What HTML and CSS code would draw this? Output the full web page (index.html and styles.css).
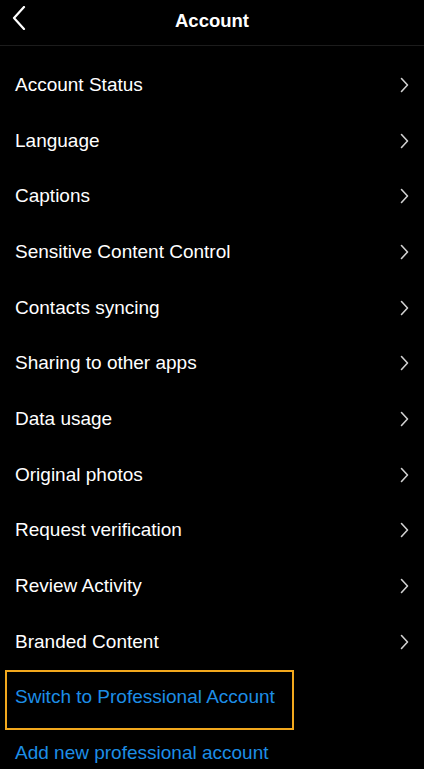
FILE: index.html
```html
<!DOCTYPE html>
<html lang="en">
<head>
  <meta charset="UTF-8">
  <title>Account</title>
  <link rel="stylesheet" href="styles.css">
</head>
<body>
  <div class="header">
    <svg class="back" width="14" height="24" viewBox="0 0 14 24"><path d="M12 1 L2 12 L12 23" fill="none" stroke="#fff" stroke-width="2.2" stroke-linecap="round" stroke-linejoin="round"/></svg>
    <h1>Account</h1>
  </div>

  <ul class="menu">
    <li>Account Status <svg class="chev" viewBox="0 0 9 16"><path d="M1.5 1.5 L7.5 8 L1.5 14.5"/></svg></li>
    <li>Language <svg class="chev" viewBox="0 0 9 16"><path d="M1.5 1.5 L7.5 8 L1.5 14.5"/></svg></li>
    <li>Captions <svg class="chev" viewBox="0 0 9 16"><path d="M1.5 1.5 L7.5 8 L1.5 14.5"/></svg></li>
    <li>Sensitive Content Control <svg class="chev" viewBox="0 0 9 16"><path d="M1.5 1.5 L7.5 8 L1.5 14.5"/></svg></li>
    <li>Contacts syncing <svg class="chev" viewBox="0 0 9 16"><path d="M1.5 1.5 L7.5 8 L1.5 14.5"/></svg></li>
    <li>Sharing to other apps <svg class="chev" viewBox="0 0 9 16"><path d="M1.5 1.5 L7.5 8 L1.5 14.5"/></svg></li>
    <li>Data usage <svg class="chev" viewBox="0 0 9 16"><path d="M1.5 1.5 L7.5 8 L1.5 14.5"/></svg></li>
    <li>Original photos <svg class="chev" viewBox="0 0 9 16"><path d="M1.5 1.5 L7.5 8 L1.5 14.5"/></svg></li>
    <li>Request verification <svg class="chev" viewBox="0 0 9 16"><path d="M1.5 1.5 L7.5 8 L1.5 14.5"/></svg></li>
    <li>Review Activity <svg class="chev" viewBox="0 0 9 16"><path d="M1.5 1.5 L7.5 8 L1.5 14.5"/></svg></li>
    <li>Branded Content <svg class="chev" viewBox="0 0 9 16"><path d="M1.5 1.5 L7.5 8 L1.5 14.5"/></svg></li>
    <li class="link highlight">Switch to Professional Account</li>
    <li class="link">Add new professional account</li>
  </ul>
</body>
</html>
```

FILE: styles.css
```css
body {
  margin: 0;
  background: #000;
  color: #fff;
  font-family: "Liberation Sans", Arial, sans-serif;
  overflow: hidden;
}
.header {
  position: relative;
  height: 45px;
  border-bottom: 1px solid #1c1c1c;
  display: flex;
  align-items: center;
  justify-content: center;
}
.back {
  position: absolute;
  left: 12px;
  top: 6px;
}
h1 {
  margin: 0;
  font-size: 18.5px;
  font-weight: bold;
  margin-top: -4px;
}
.menu {
  list-style: none;
  margin: 0;
  padding: 0 0 0 15px;
  margin-top: 11px;
}
.menu li {
  position: relative;
  height: 55.7px;
  display: flex;
  align-items: center;
  justify-content: space-between;
  font-size: 19px;
  padding-right: 15px;
}
.chev {
  width: 9px;
  height: 16px;
  fill: none;
  stroke: #d0d0d0;
  stroke-width: 1.6;
  stroke-linecap: round;
  stroke-linejoin: round;
}
.menu li.link {
  color: #1d8ee6;
}
.menu li.highlight::after {
  content: "";
  position: absolute;
  left: -10px;
  top: 0;
  width: 289px;
  height: 60px;
  box-sizing: border-box;
  border: 2px solid #f2a81d;
}
```
